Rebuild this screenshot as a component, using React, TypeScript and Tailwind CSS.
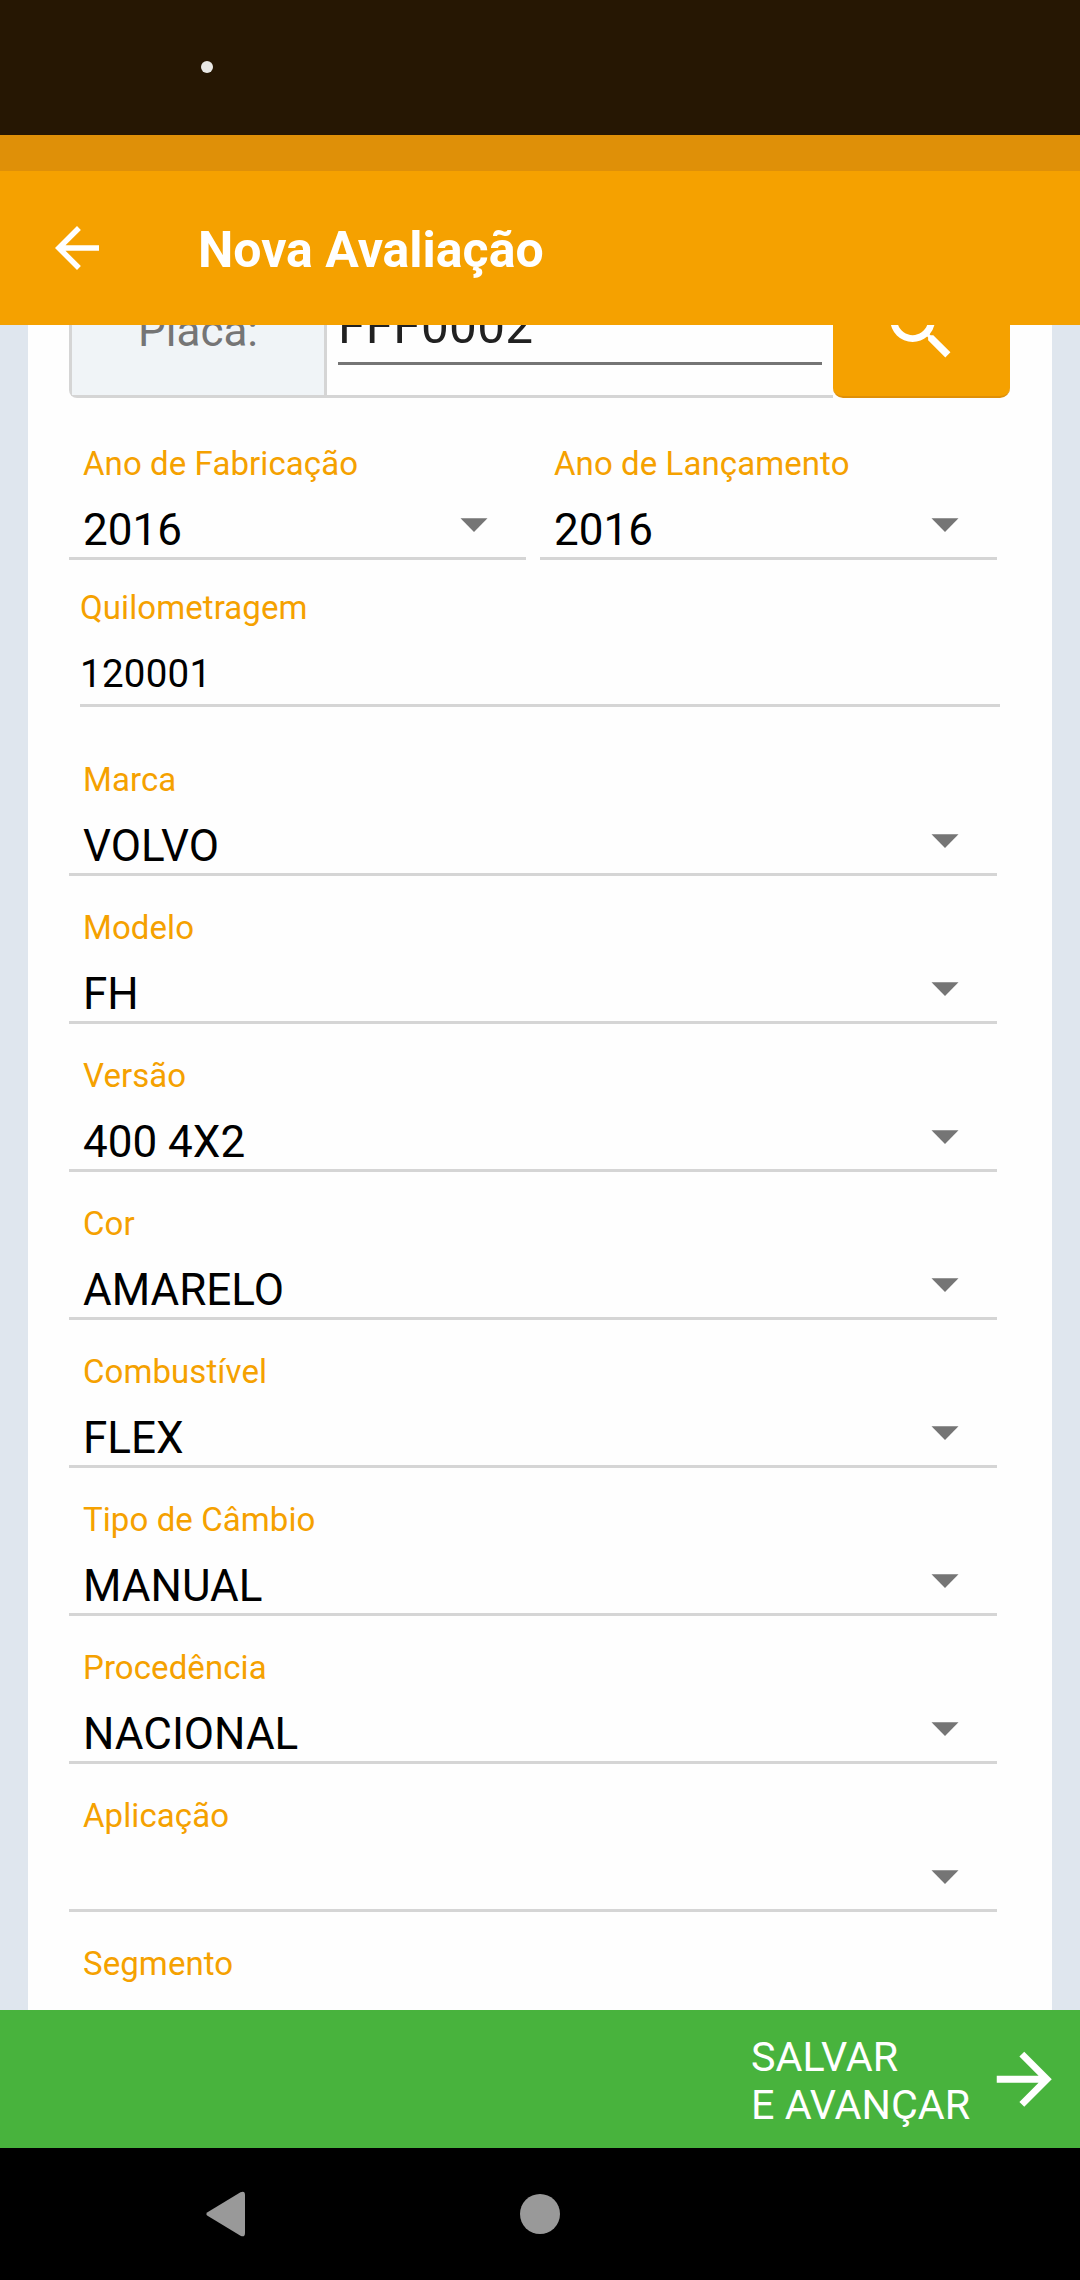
import React from "react";

const fields = [
  { label: "Marca", value: "VOLVO" },
  { label: "Modelo", value: "FH" },
  { label: "Versão", value: "400 4X2" },
  { label: "Cor", value: "AMARELO" },
  { label: "Combustível", value: "FLEX" },
  { label: "Tipo de Câmbio", value: "MANUAL" },
  { label: "Procedência", value: "NACIONAL" },
  { label: "Aplicação", value: "" },
  { label: "Segmento", value: "" },
];

function SelectField({ label, value }: { label: string; value: string }) {
  return (
    <div className="flex h-[148px] shrink-0 grow basis-0 flex-col border-b-[3px] border-[#d5d5d5] px-[14px] pt-8">
      <label className="block h-10 text-[33px] leading-10 tracking-[0.08px] whitespace-nowrap text-[#f5a100]">{label}</label>
      <div className="mt-5 flex h-[52px] items-start justify-between pr-6">
        <span className="text-[44px] leading-[52px] whitespace-nowrap text-black">{value}</span>
        <svg className="mt-[14px] h-[14px] w-7" viewBox="0 0 28 14" fill="#757575">
          <path d="M0.5 0.3h27L14 14z" />
        </svg>
      </div>
    </div>
  );
}

export default function App() {
  return (
    <div className="flex h-[2280px] w-[1080px] flex-col overflow-hidden bg-[#dfe6ee] font-['Roboto',sans-serif]">
      <div className="h-[135px] shrink-0 bg-[#261703] pt-[61px] pl-[201px]">
        <div className="size-3 rounded-full bg-[#e9e8e5]" />
      </div>
      <div className="h-9 shrink-0 bg-[#df9008]" />
      <header className="flex h-[154px] shrink-0 items-center bg-[#f5a100] pl-11 text-white">
        <svg className="size-[66px]" viewBox="0 0 24 24" fill="currentColor">
          <path d="M20 11H7.83l5.59-5.59L12 4l-8 8 8 8 1.41-1.41L7.83 13H20v-2z" />
        </svg>
        <h1 className="ml-[88px] pt-1 text-[50px] leading-[60px] font-bold whitespace-nowrap">Nova Avaliação</h1>
      </header>

      <main className="h-[1685px] shrink-0 overflow-hidden px-7">
        <div className="flex h-full flex-col bg-[#fefefe]">
          <div className="-mt-[65px] ml-[41px] flex h-[138px] w-[941px] shrink-0">
            <div className="flex min-w-0 flex-1 rounded-l-lg border-[3px] border-r-0 border-[#d5d5d5]">
              <div className="flex w-[255px] items-center justify-center border-r-[3px] border-[#d5d5d5] bg-[#f0f4f7] pt-1 text-[44px] leading-[52px] text-[#757575]">
                Placa:
              </div>
              <div className="mt-[14px] mr-[11px] ml-[11px] h-[88px] flex-1 border-b-[3px] border-[#757575] pt-[19px] text-[49.5px] leading-[60px] tracking-[0.3px] text-[#212121]">
                FFF0002
              </div>
            </div>
            <button className="flex w-[177px] items-center justify-center rounded-[10px] border-b-2 border-[#df9008] bg-[#f5a100] text-white">
              <svg className="size-[82.5px]" viewBox="0 0 24 24" fill="currentColor">
                <path d="M15.5 14h-.79l-.28-.27A6.471 6.471 0 0 0 16 9.5 6.5 6.5 0 1 0 9.5 16c1.61 0 3.09-.59 4.23-1.57l.27.28v.79l5 4.99L20.49 19l-4.99-5zm-6 0C7.01 14 5 11.99 5 9.5S7.01 5 9.5 5 14 7.01 14 9.5 11.99 14 9.5 14z" />
              </svg>
            </button>
          </div>

          <div className="mt-[14px] mr-[55px] ml-[41px] flex shrink-0 gap-[14px]">
            <SelectField label="Ano de Fabricação" value="2016" />
            <SelectField label="Ano de Lançamento" value="2016" />
          </div>

          <div className="mr-[52px] ml-[52px] h-[147px] shrink-0 border-b-[3px] border-[#d5d5d5] pt-7">
            <label className="block text-[33px] leading-10 tracking-[0.08px] text-[#f5a100]">Quilometragem</label>
            <div className="mt-[23px] text-[38.5px] leading-[46px] tracking-[0.25px] text-black">120001</div>
          </div>

          <div className="mt-[21px] mr-[55px] ml-[41px] shrink-0">
            {fields.map((f) => (
              <SelectField key={f.label} label={f.label} value={f.value} />
            ))}
          </div>
        </div>
      </main>

      <button className="flex h-[138px] shrink-0 items-center justify-end bg-[#48b33d] pr-[14.5px] text-left text-white">
        <span className="w-[232px] pt-[3px] text-[41.25px] leading-12 whitespace-nowrap">
          SALVAR
          <br />E AVANÇAR
        </span>
        <svg className="size-[82.5px]" viewBox="0 0 24 24" fill="currentColor">
          <path d="M12 4l-1.41 1.41L16.17 11H4v2h12.17l-5.58 5.59L12 20l8-8z" />
        </svg>
      </button>

      <nav className="grid h-[132px] shrink-0 grid-cols-[450px_180px_450px] items-center bg-black">
        <svg className="ml-[206px] h-[46px] w-[40px]" viewBox="0 0 40 46" fill="#999999">
          <path d="M1.5 21.2L34.5 1.2Q39 -0.7 39 4V42Q39 46.7 34.5 44.8L1.5 24.8Q-0.8 23 1.5 21.2z" />
        </svg>
        <div className="size-10 justify-self-center rounded-full bg-[#999999]" />
      </nav>
    </div>
  );
}
